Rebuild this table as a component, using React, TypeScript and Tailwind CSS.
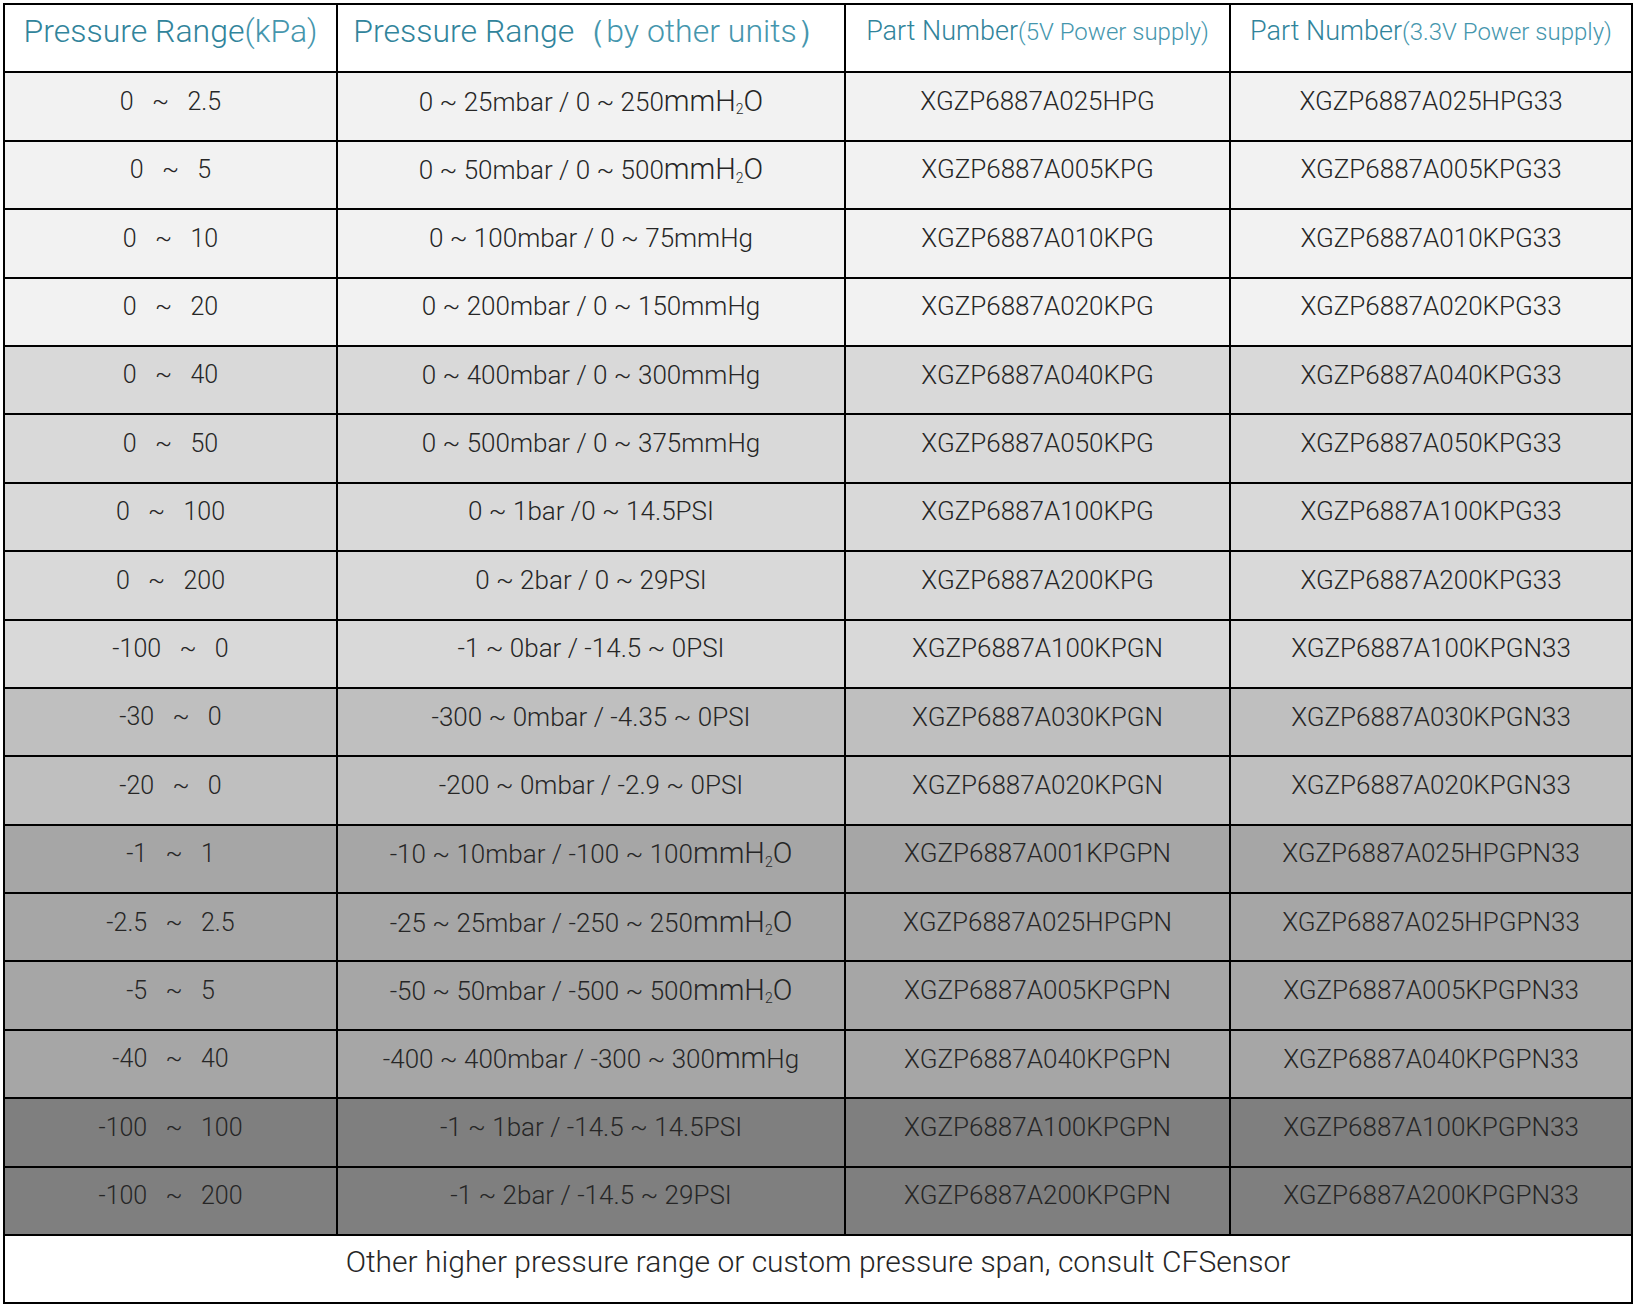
import React from "react"

type Row = {
  range: string
  other: React.ReactNode
  p5: string
  p33: string
  bg: string
}

const Water = ({ pre }: { pre: string }) => (
  <>
    {pre}
    <span className="text-[29px]">mmH</span>
    <sub className="text-[14px]">2</sub>
    <span className="text-[29px]">O</span>
  </>
)

const rows: Row[] = [
  { range: "0   ~   2.5", other: <Water pre="0 ~ 25mbar / 0 ~ 250" />, p5: "XGZP6887A025HPG", p33: "XGZP6887A025HPG33", bg: "bg-[#f2f2f2]" },
  { range: "0   ~   5", other: <Water pre="0 ~ 50mbar / 0 ~ 500" />, p5: "XGZP6887A005KPG", p33: "XGZP6887A005KPG33", bg: "bg-[#f2f2f2]" },
  { range: "0   ~   10", other: "0 ~ 100mbar / 0 ~ 75mmHg", p5: "XGZP6887A010KPG", p33: "XGZP6887A010KPG33", bg: "bg-[#f2f2f2]" },
  { range: "0   ~   20", other: "0 ~ 200mbar / 0 ~ 150mmHg", p5: "XGZP6887A020KPG", p33: "XGZP6887A020KPG33", bg: "bg-[#f2f2f2]" },
  { range: "0   ~   40", other: "0 ~ 400mbar / 0 ~ 300mmHg", p5: "XGZP6887A040KPG", p33: "XGZP6887A040KPG33", bg: "bg-[#d9d9d9]" },
  { range: "0   ~   50", other: "0 ~ 500mbar / 0 ~ 375mmHg", p5: "XGZP6887A050KPG", p33: "XGZP6887A050KPG33", bg: "bg-[#d9d9d9]" },
  { range: "0   ~   100", other: "0 ~ 1bar /0 ~ 14.5PSI", p5: "XGZP6887A100KPG", p33: "XGZP6887A100KPG33", bg: "bg-[#d9d9d9]" },
  { range: "0   ~   200", other: "0 ~ 2bar / 0 ~ 29PSI", p5: "XGZP6887A200KPG", p33: "XGZP6887A200KPG33", bg: "bg-[#d9d9d9]" },
  { range: "-100   ~   0", other: "-1 ~ 0bar / -14.5 ~ 0PSI", p5: "XGZP6887A100KPGN", p33: "XGZP6887A100KPGN33", bg: "bg-[#d9d9d9]" },
  { range: "-30   ~   0", other: "-300 ~ 0mbar / -4.35 ~ 0PSI", p5: "XGZP6887A030KPGN", p33: "XGZP6887A030KPGN33", bg: "bg-[#bfbfbf]" },
  { range: "-20   ~   0", other: "-200 ~ 0mbar / -2.9 ~ 0PSI", p5: "XGZP6887A020KPGN", p33: "XGZP6887A020KPGN33", bg: "bg-[#bfbfbf]" },
  { range: "-1   ~   1", other: <Water pre="-10 ~ 10mbar / -100 ~ 100" />, p5: "XGZP6887A001KPGPN", p33: "XGZP6887A025HPGPN33", bg: "bg-[#a6a6a6]" },
  { range: "-2.5   ~   2.5", other: <Water pre="-25 ~ 25mbar / -250 ~ 250" />, p5: "XGZP6887A025HPGPN", p33: "XGZP6887A025HPGPN33", bg: "bg-[#a6a6a6]" },
  { range: "-5   ~   5", other: <Water pre="-50 ~ 50mbar / -500 ~ 500" />, p5: "XGZP6887A005KPGPN", p33: "XGZP6887A005KPGPN33", bg: "bg-[#a6a6a6]" },
  {
    range: "-40   ~   40",
    other: (
      <>
        -400 ~ 400mbar / -300 ~ 300<span className="text-[29px]">mm</span>Hg
      </>
    ),
    p5: "XGZP6887A040KPGPN",
    p33: "XGZP6887A040KPGPN33",
    bg: "bg-[#a6a6a6]",
  },
  { range: "-100   ~   100", other: "-1 ~ 1bar / -14.5 ~ 14.5PSI", p5: "XGZP6887A100KPGPN", p33: "XGZP6887A100KPGPN33", bg: "bg-[#7f7f7f]" },
  { range: "-100   ~   200", other: "-1 ~ 2bar / -14.5 ~ 29PSI", p5: "XGZP6887A200KPGPN", p33: "XGZP6887A200KPGPN33", bg: "bg-[#7f7f7f]" },
]

const cell = "border-2 border-black text-center align-middle pb-[10px] whitespace-pre"
const head = "border-2 border-black text-center align-middle pb-[14px] whitespace-pre font-light"

export default function App() {
  return (
    <div className="min-h-screen bg-white pl-[3px] pt-[3px] font-['Roboto',sans-serif] text-[#262626]">
      <table className="w-[1630px] table-fixed border-collapse border-2 border-black">
        <colgroup>
          <col className="w-[333px]" />
          <col className="w-[508px]" />
          <col className="w-[385px]" />
          <col className="w-[402px]" />
        </colgroup>
        <thead>
          <tr className="h-[68.4px] bg-white text-[#31849b]">
            <th className={head + " text-[32px]"}>
              Pressure Range<span className="text-[#4596ad]">(kPa)</span>
            </th>
            <th className={head + " text-[32px]"}>
              Pressure Range<span className="text-[#4596ad]">（by other units）</span>
            </th>
            <th className={head + " text-[27px]"}>
              Part Number<span className="text-[24px] text-[#4596ad]">(5V Power supply)</span>
            </th>
            <th className={head + " text-[27px]"}>
              Part Number<span className="text-[24px] text-[#4596ad]">(3.3V Power supply)</span>
            </th>
          </tr>
        </thead>
        <tbody className="font-light">
          {rows.map((r) => (
            <tr key={r.p5 + r.range} className={"h-[68.4px] " + r.bg}>
              <td className={cell + " text-[25px]"}>{r.range}</td>
              <td className={cell + " text-[26px]"}>{r.other}</td>
              <td className={cell + " text-[26px]"}>{r.p5}</td>
              <td className={cell + " text-[26px]"}>{r.p33}</td>
            </tr>
          ))}
          <tr className="h-[68.4px] bg-white">
            <td colSpan={4} className={cell + " text-[30px] pb-[16px]"}>
              Other higher pressure range or custom pressure span, consult CFSensor
            </td>
          </tr>
        </tbody>
      </table>
    </div>
  )
}
